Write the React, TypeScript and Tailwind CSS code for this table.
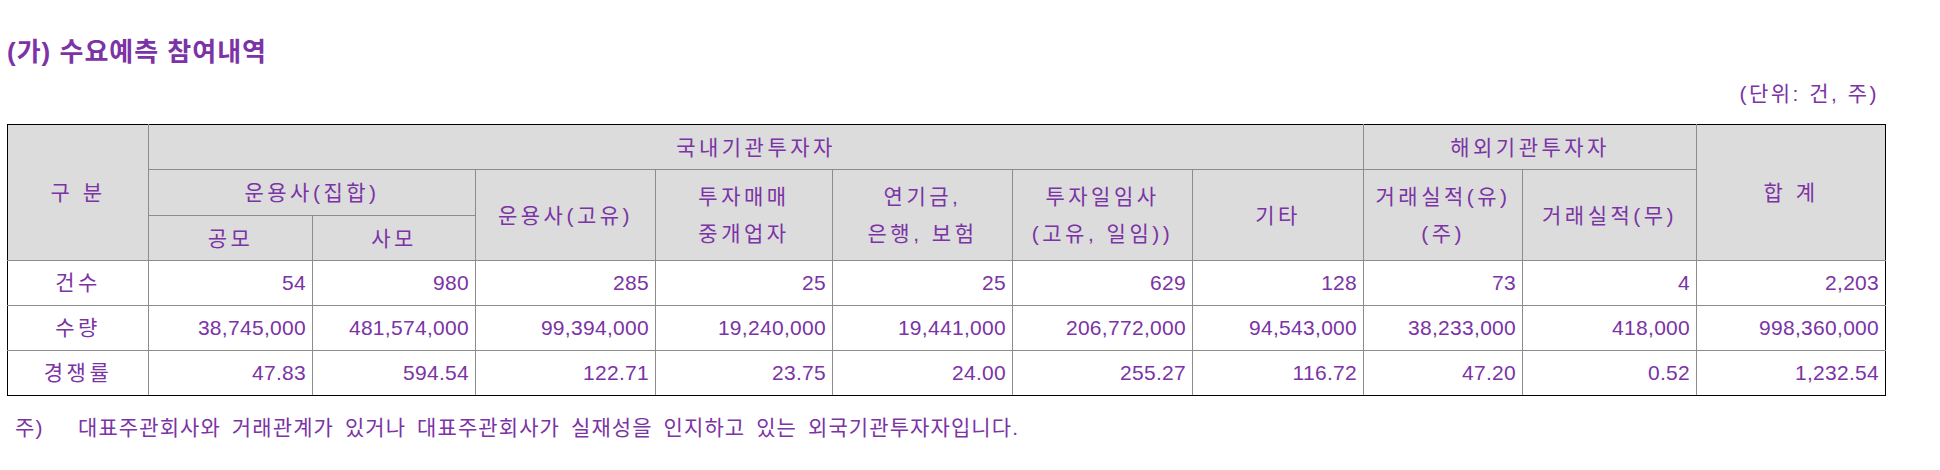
import React from 'react'

const cols = [141, 164, 163, 180, 177, 180, 180, 171, 159, 174, 189]

const rows = [
  { label: '건수', values: ['54', '980', '285', '25', '25', '629', '128', '73', '4', '2,203'] },
  {
    label: '수량',
    values: [
      '38,745,000',
      '481,574,000',
      '99,394,000',
      '19,240,000',
      '19,441,000',
      '206,772,000',
      '94,543,000',
      '38,233,000',
      '418,000',
      '998,360,000',
    ],
  },
  { label: '경쟁률', values: ['47.83', '594.54', '122.71', '23.75', '24.00', '255.27', '116.72', '47.20', '0.52', '1,232.54'] },
]

const th = 'border border-[#8c8c8c] bg-[#dcdcdc] font-normal text-center align-middle tracking-[3.5px] leading-[37px] p-0'
const td = 'border border-[#8c8c8c] text-right align-middle pr-[6px] text-[21px] leading-[24px] tracking-[0.3px]'

export default function App() {
  return (
    <div className="w-[1940px] h-[470px] bg-white pl-[7px] pt-[37px] text-[#7b33a5] font-['Liberation_Sans','Noto_Sans_CJK_KR',sans-serif]">
      <h2 className="text-[26px] leading-[30px] font-bold tracking-[1px]">(가) 수요예측 참여내역</h2>

      <div className="w-[1872px] mt-[15px] text-right text-[21px] leading-[24px] tracking-[2.5px]">(단위: 건, 주)</div>

      <table className="mt-[18px] w-[1878px] table-fixed border-collapse text-[21px]">
        <colgroup>
          {cols.map((w, i) => (
            <col key={i} style={{ width: w }} />
          ))}
        </colgroup>
        <thead>
          <tr className="h-[45px]">
            <th rowSpan={3} className={`${th} border-l-black border-t-black`}>
              구 분
            </th>
            <th colSpan={7} className={`${th} border-t-black`}>
              국내기관투자자
            </th>
            <th colSpan={2} className={`${th} border-t-black`}>
              해외기관투자자
            </th>
            <th rowSpan={3} className={`${th} border-r-black border-t-black`}>
              합 계
            </th>
          </tr>
          <tr className="h-[46px]">
            <th colSpan={2} className={th}>
              운용사(집합)
            </th>
            <th rowSpan={2} className={th}>
              운용사(고유)
            </th>
            <th rowSpan={2} className={th}>
              투자매매
              <br />
              중개업자
            </th>
            <th rowSpan={2} className={th}>
              연기금,
              <br />
              은행, 보험
            </th>
            <th rowSpan={2} className={th}>
              투자일임사
              <br />
              (고유, 일임))
            </th>
            <th rowSpan={2} className={th}>
              기타
            </th>
            <th rowSpan={2} className={th}>
              거래실적(유)
              <br />
              (주)
            </th>
            <th rowSpan={2} className={th}>
              거래실적(무)
            </th>
          </tr>
          <tr className="h-[45px]">
            <th className={th}>공모</th>
            <th className={th}>사모</th>
          </tr>
        </thead>
        <tbody>
          {rows.map((row, r) => {
            const last = r === rows.length - 1
            return (
              <tr key={row.label} className="h-[45px]">
                <td
                  className={`border border-[#8c8c8c] border-l-black text-center align-middle tracking-[3.5px] ${
                    last ? 'border-b-black' : ''
                  }`}
                >
                  {row.label}
                </td>
                {row.values.map((v, i) => (
                  <td
                    key={i}
                    className={`${td} ${last ? 'border-b-black' : ''} ${i === row.values.length - 1 ? 'border-r-black' : ''}`}
                  >
                    {v}
                  </td>
                ))}
              </tr>
            )
          })}
        </tbody>
      </table>

      <div className="flex mt-[20px] text-[21px] leading-[24px] tracking-[1.1px] [word-spacing:4px]">
        <span className="w-[71px] pl-[8px]">주)</span>
        <span>대표주관회사와 거래관계가 있거나 대표주관회사가 실재성을 인지하고 있는 외국기관투자자입니다.</span>
      </div>
    </div>
  )
}
